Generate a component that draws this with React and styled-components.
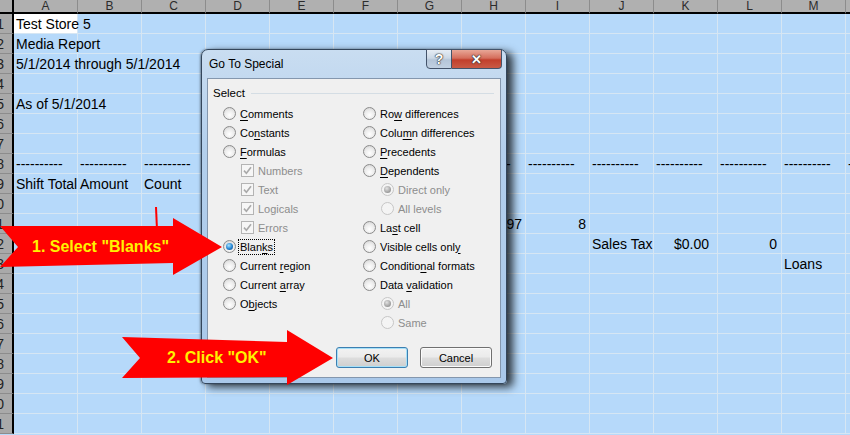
import React from 'react'
import styled, { createGlobalStyle } from 'styled-components'

const GlobalStyle = createGlobalStyle`
    html, body {
        margin: 0;
        padding: 0;
        overflow: hidden;
        background: #b6d9fa;
    }
`;

const Page = styled.div`
    position: relative;
    width: 850px;
    height: 435px;
    overflow: hidden;
    background: #b6d9fa;
    font-family: "Liberation Sans", Arial, sans-serif;
`;

const Sheet = styled.div`
    display: grid;
    grid-template-columns: 14px repeat(14, 64px);
    grid-template-rows: 14px repeat(21, 20px);
`;

const Corner = styled.div`
    box-sizing: border-box;
    background: #adadad;
    border-right: 2px solid #000;
    border-bottom: 2px solid #000;
`;

const ColHead = styled.div`
    box-sizing: border-box;
    background: #b0b0b0;
    border-right: 1px solid #8c8c8c;
    border-bottom: 2px solid #000;
    display: flex;
    align-items: center;
    justify-content: center;
    font-size: 12px;
    line-height: 12px;
    color: #2c2c2c;
`;

const RowHead = styled.div`
    box-sizing: border-box;
    background: #a9a9a9;
    border-right: 2px solid #000;
    border-bottom: 1px solid #8c8c8c;
    display: flex;
    align-items: center;
    justify-content: flex-end;
    padding-right: 8px;
    font-size: 14px;
    color: #222;
    overflow: hidden;
    white-space: nowrap;
`;

const Cell = styled.div`
    box-sizing: border-box;
    background: ${p => (p.$active ? '#ffffff' : '#b6d9fa')};
    border-right: 1px solid #d6e6f3;
    border-bottom: 1px solid #d6e6f3;
    display: flex;
    align-items: center;
    justify-content: ${p => (p.$right ? 'flex-end' : 'flex-start')};
    padding: 0 ${p => p.$padRight ?? 3}px 0 2px;
    font-size: 14px;
    color: #000;
    white-space: nowrap;
    overflow: visible;
`;

/* text spills over the neighbouring cells, like Excel does */
const CellText = styled.span`
    position: relative;
    z-index: 1;
`;

/* ---------- dialog ---------- */

const Dialog = styled.div`
    position: absolute;
    z-index: 5;
    left: 201px;
    top: 49px;
    width: 306px;
    height: 335px;
    box-sizing: border-box;
    border: 1px solid #34465b;
    border-radius: 7px 7px 4px 4px;
    background: linear-gradient(180deg, #c9ddf1 0%, #b3cfec 30%, #a9c8ea 100%);
    box-shadow: 6px 3px 8px rgba(0, 0, 0, 0.75), -1px 0 2px rgba(0, 0, 0, 0.35);
    padding: 0 5px 5px;
    display: flex;
    flex-direction: column;
    font-family: "Liberation Sans", Arial, sans-serif;
`;

const TitleBar = styled.div`
    height: 28px;
    display: flex;
    justify-content: space-between;
    align-items: flex-start;
`;

const Title = styled.div`
    font-size: 12px;
    line-height: 28px;
    padding-left: 2px;
    color: #000;
`;

const Controls = styled.div`
    display: flex;
    margin-top: -1px;
    margin-right: -1px;
`;

const CtlButton = styled.div`
    height: 20px;
    width: ${p => p.$w}px;
    box-sizing: border-box;
    border: 1px solid #43536a;
    border-left-width: ${p => (p.$close ? 0 : 1)}px;
    border-radius: ${p => (p.$close ? '0 0 4px 0' : '0 0 0 4px')};
    background: ${p =>
        p.$close
            ? 'linear-gradient(180deg, #e8a797 0%, #d56e5c 45%, #c23f2c 55%, #c95a45 100%)'
            : 'linear-gradient(180deg, #e6edf5 0%, #cbd8e6 45%, #b4c5d8 55%, #c1d1e2 100%)'};
    display: flex;
    align-items: center;
    justify-content: center;
    font-weight: bold;
    font-size: ${p => (p.$close ? 13 : 14)}px;
    color: #fff;
    text-shadow: 0 0 1px #2a2a2a, 0 0 1px #2a2a2a, 0 0 2px #444;
`;

const Panel = styled.div`
    flex: 1;
    background: #f0f0f0;
    border: 1px solid #8497ae;
    display: flex;
    flex-direction: column;
`;

const GroupHead = styled.div`
    display: flex;
    align-items: center;
    margin: 7px 6px 0 5px;
    font-size: 11.5px;
    height: 14px;
    color: #000;
`;

const GroupLine = styled.span`
    flex: 1;
    margin-left: 6px;
    border-top: 1px solid #d4dde4;
`;

const Options = styled.div`
    display: grid;
    grid-template-columns: 140px 1fr;
    padding-left: 15px;
    margin-top: 4px;
`;

const Column = styled.div`
    display: flex;
    flex-direction: column;
`;

const Option = styled.div`
    display: flex;
    align-items: center;
    height: 19px;
    gap: 4px;
    padding-left: ${p => p.$indent}px;
    font-size: 11px;
    color: ${p => (p.$disabled ? '#8d8d8d' : '#000')};
`;

const RadioDot = styled.span`
    flex: none;
    width: 13px;
    height: 13px;
    box-sizing: border-box;
    border-radius: 50%;
    border: 1px solid ${p => (p.$disabled ? '#c6c6c6' : '#8b8b8b')};
    background: ${p =>
        p.$disabled
            ? '#f4f4f4'
            : 'radial-gradient(circle at 50% 65%, #ffffff 0%, #ececec 50%, #cdcdcd 100%)'};
    display: flex;
    align-items: center;
    justify-content: center;

    &::after {
        content: '';
        display: ${p => (p.$checked ? 'block' : 'none')};
        width: 7px;
        height: 7px;
        border-radius: 50%;
        background: ${p =>
            p.$disabled
                ? 'radial-gradient(circle at 40% 35%, #e2e2e2, #9a9a9a 70%)'
                : 'radial-gradient(circle at 40% 35%, #a9e4ff, #2283d2 55%, #0b3e76)'};
    }
`;

const CheckBox = styled.span`
    flex: none;
    width: 13px;
    height: 13px;
    box-sizing: border-box;
    border: 1px solid #b4b4b4;
    background: #f6f6f6;
    display: flex;
    align-items: center;
    justify-content: center;
`;

const Label = styled.span`
    white-space: nowrap;
    padding: 0 1px;
    margin-left: -1px;
    outline: ${p => (p.$focus ? '1px dotted #000' : 'none')};
    outline-offset: 0;
    line-height: 14px;
`;

const Key = styled.span`
    text-decoration: underline;
    text-underline-offset: 2px;
`;

const ButtonRow = styled.div`
    margin-top: auto;
    display: flex;
    justify-content: flex-end;
    gap: 12px;
    padding: 0 8px 9px 0;
`;

const Button = styled.div`
    width: 72px;
    height: 21px;
    box-sizing: border-box;
    border: 1px solid ${p => (p.$default ? '#3c7fb1' : '#707070')};
    border-radius: 3px;
    background: linear-gradient(180deg, #f2f2f2 0%, #ebebeb 48%, #dddddd 52%, #cfcfcf 100%);
    box-shadow: ${p => (p.$default ? 'inset 0 0 0 1px #a6e0f8' : 'inset 0 0 0 1px #fbfbfb')};
    display: flex;
    align-items: center;
    justify-content: center;
    font-size: 11px;
    color: #000;
`;

/* ---------- callout arrows ---------- */

const Callout = styled.div`
    position: absolute;
    z-index: 10;
    left: ${p => p.$x}px;
    top: ${p => p.$y}px;
    width: ${p => p.$w}px;
    height: ${p => p.$h}px;
    display: flex;
    align-items: center;
    padding-left: ${p => p.$pad}px;
    box-sizing: border-box;
    pointer-events: none;

    svg {
        position: absolute;
        left: 0;
        top: 0;
        overflow: visible;
    }
`;

const CalloutText = styled.span`
    position: relative;
    font-family: "Liberation Sans", Arial, sans-serif;
    font-weight: bold;
    font-size: 16px;
    color: #fff200;
    white-space: nowrap;
`;

const columns = ['A', 'B', 'C', 'D', 'E', 'F', 'G', 'H', 'I', 'J', 'K', 'L', 'M', 'N'];

const dash = '----------';

// columns D..G sit fully under the dialog, so row 8 only shows dashes outside it
const dashRow = Object.fromEntries(
    columns.map((c, i) => [i, { text: dash }]).filter(([i]) => i < 3 || i > 6)
);

const data = {
    1: { 0: { text: 'Test Store 5', active: true } },
    2: { 0: { text: 'Media Report' } },
    3: { 0: { text: '5/1/2014 through 5/1/2014' } },
    5: { 0: { text: 'As of 5/1/2014' } },
    8: dashRow,
    9: { 0: { text: 'Shift Total' }, 1: { text: 'Amount' }, 2: { text: 'Count' } },
    11: { 7: { text: '97', right: true }, 8: { text: '8', right: true } },
    12: {
        9: { text: 'Sales Tax' },
        10: { text: '$0.00', right: true, padRight: 8 },
        11: { text: '0', right: true, padRight: 4 },
    },
    13: { 12: { text: 'Loans' } },
};

const leftOptions = [
    { type: 'radio', label: 'Comments', key: 0 },
    { type: 'radio', label: 'Constants', key: 2 },
    { type: 'radio', label: 'Formulas', key: 0 },
    { type: 'check', label: 'Numbers', indent: 18, disabled: true },
    { type: 'check', label: 'Text', indent: 18, disabled: true },
    { type: 'check', label: 'Logicals', indent: 18, disabled: true },
    { type: 'check', label: 'Errors', indent: 18, disabled: true },
    { type: 'radio', label: 'Blanks', key: 4, checked: true, focus: true },
    { type: 'radio', label: 'Current region', key: 8 },
    { type: 'radio', label: 'Current array', key: 8 },
    { type: 'radio', label: 'Objects', key: 1 },
];

const rightOptions = [
    { type: 'radio', label: 'Row differences', key: 2 },
    { type: 'radio', label: 'Column differences', key: 4 },
    { type: 'radio', label: 'Precedents', key: 0 },
    { type: 'radio', label: 'Dependents', key: 0 },
    { type: 'radio', label: 'Direct only', indent: 18, disabled: true, checked: true },
    { type: 'radio', label: 'All levels', indent: 18, disabled: true },
    { type: 'radio', label: 'Last cell', key: 2 },
    { type: 'radio', label: 'Visible cells only', key: 17 },
    { type: 'radio', label: 'Conditional formats', key: 8 },
    { type: 'radio', label: 'Data validation', key: 5 },
    { type: 'radio', label: 'All', indent: 18, disabled: true, checked: true },
    { type: 'radio', label: 'Same', indent: 18, disabled: true },
];

const AccessLabel = ({ label, keyIndex, focus }) => {
    if (keyIndex === undefined || keyIndex >= label.length) {
        return <Label $focus={focus}>{label}</Label>
    }
    return (
        <Label $focus={focus}>
            {label.slice(0, keyIndex)}
            <Key>{label[keyIndex]}</Key>
            {label.slice(keyIndex + 1)}
        </Label>
    )
}

const OptionItem = ({ opt }) => (
    <Option $indent={opt.indent || 0} $disabled={opt.disabled}>
        {opt.type === 'radio' ? (
            <RadioDot $checked={opt.checked} $disabled={opt.disabled} />
        ) : (
            <CheckBox>
                <svg width="9" height="9" viewBox="0 0 9 9">
                    <path d="M1 4.6 L3.4 7.2 L8 1.2" fill="none" stroke="#a9a9a9" strokeWidth="1.6" />
                </svg>
            </CheckBox>
        )}
        <AccessLabel label={opt.label} keyIndex={opt.key} focus={opt.focus} />
    </Option>
)

const GoToSpecial = () => (
    <Dialog>
        <TitleBar>
            <Title>Go To Special</Title>
            <Controls>
                <CtlButton $w={26}>?</CtlButton>
                <CtlButton $w={50} $close>✕</CtlButton>
            </Controls>
        </TitleBar>
        <Panel>
            <GroupHead>
                Select
                <GroupLine />
            </GroupHead>
            <Options>
                <Column>
                    {leftOptions.map(o => <OptionItem key={o.label} opt={o} />)}
                </Column>
                <Column>
                    {rightOptions.map(o => <OptionItem key={o.label} opt={o} />)}
                </Column>
            </Options>
            <ButtonRow>
                <Button $default>OK</Button>
                <Button>Cancel</Button>
            </ButtonRow>
        </Panel>
    </Dialog>
)

const App = () => {
    const rows = Array.from({ length: 21 }, (_, i) => i + 1);
    return (
        <Page>
            <GlobalStyle />
            <Sheet>
                <Corner />
                {columns.map(c => <ColHead key={c}>{c}</ColHead>)}
                {rows.map(r => (
                    <React.Fragment key={r}>
                        <RowHead>{r}</RowHead>
                        {columns.map((c, ci) => {
                            const cell = data[r] && data[r][ci];
                            return (
                                <Cell
                                    key={c + r}
                                    $active={cell && cell.active}
                                    $right={cell && cell.right}
                                    $padRight={cell && cell.padRight}
                                >
                                    {cell && <CellText>{cell.text}</CellText>}
                                </Cell>
                            )
                        })}
                    </React.Fragment>
                ))}
            </Sheet>

            <GoToSpecial />

            <Callout $x={0} $y={218} $w={222} $h={57} $pad={32}>
                <svg width="222" height="57" viewBox="0 0 222 57">
                    <path d="M156 -11 L157 12" stroke="#ff0000" strokeWidth="2" />
                    <polygon points="0,8 173,8 173,0 222,29 173,57 173,45 0,49 18,29" fill="#ff0000" />
                </svg>
                <CalloutText>1. Select "Blanks"</CalloutText>
            </Callout>

            <Callout $x={122} $y={330} $w={211} $h={55} $pad={45}>
                <svg width="211" height="55" viewBox="0 0 211 55">
                    <polygon points="0,7 165,12 165,0 211,28 165,55 165,47 0,48 18,28" fill="#ff0000" />
                </svg>
                <CalloutText>2. Click "OK"</CalloutText>
            </Callout>
        </Page>
    )
}

export default App
